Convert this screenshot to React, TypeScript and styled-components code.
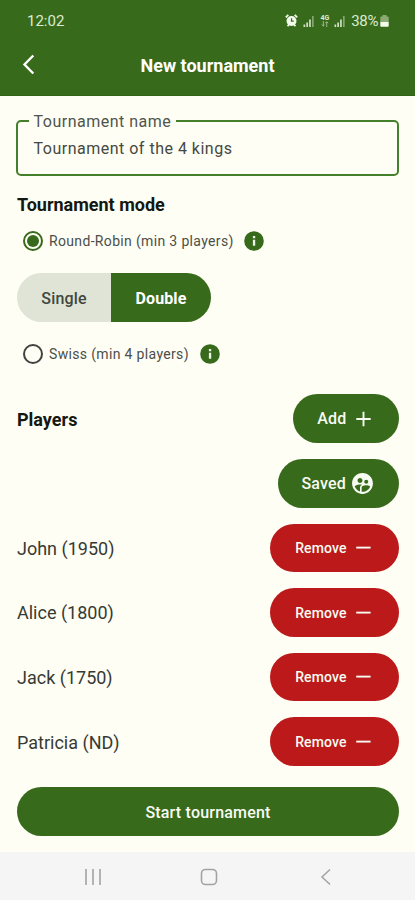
import React from "react";
import styled, { createGlobalStyle } from "styled-components";
import { MdSupervisedUserCircle } from "react-icons/md";

const green = "#386a1c";
const red = "#bb191a";
const paper = "#fefef5";

const GlobalStyle = createGlobalStyle`
  * { box-sizing: border-box; }
  body { margin: 0; background: ${paper}; font-family: Roboto, sans-serif; }
  button { font-family: inherit; border: 0; padding: 0; margin: 0; }
`;

const Screen = styled.div`
  width: 415px;
  height: 900px;
  display: flex;
  flex-direction: column;
  overflow: hidden;
  background: ${paper};
  color: #1c1f1a;
`;

const Header = styled.header`
  height: 96px;
  flex: none;
  background: ${green};
  color: #fff;
  border-bottom: 1px solid #2f6414;
`;

const StatusBar = styled.div`
  height: 40px;
  padding: 1px 26px 0 27px;
  display: flex;
  align-items: center;
  justify-content: space-between;
  color: #dcebd0;
`;

const StatusText = styled.span<{ $spacing: number; $left?: number }>`
  margin-left: ${(p) => p.$left ?? 0}px;
  font-size: 15px;
  line-height: 20px;
  letter-spacing: ${(p) => p.$spacing}px;
`;

const StatusIcons = styled.div`
  display: flex;
  align-items: center;
`;

const TitleBar = styled.div`
  height: 50px;
  display: grid;
  grid-template-columns: 60px 1fr 60px;
  align-items: center;
`;

const BackButton = styled.button`
  display: flex;
  padding-left: 20px;
  background: none;
  color: #fff;
`;

const Title = styled.h1`
  margin: 0;
  padding-top: 1px;
  text-align: center;
  font-size: 18px;
  line-height: 24px;
  font-weight: 700;
`;

const Main = styled.main`
  flex: 1;
  padding: 14px 16px 0 17px;
  display: flex;
  flex-direction: column;
`;

const Field = styled.fieldset`
  height: 66px;
  margin: 0 0 0 -1px;
  padding: 0 0 0 15.5px;
  border: 2px solid #44802b;
  border-radius: 5px;
  min-width: 0;
  flex: none;
`;

const Legend = styled.legend`
  margin-left: -5px;
  padding: 2px 5px 0;
  font-size: 16px;
  line-height: 20px;
  letter-spacing: 0.5px;
  color: #50544c;
`;

const Value = styled.div`
  margin-top: 6px;
  font-size: 16px;
  line-height: 22px;
  letter-spacing: 0.5px;
  color: #454941;
`;

const Heading = styled.h2`
  margin: 0;
  font-size: 18px;
  line-height: 24px;
  font-weight: 700;
  color: #141812;
`;

const ModeHeading = styled(Heading)`
  margin-top: 17px;
`;

const Option = styled.label<{ $top: number }>`
  margin: ${(p) => p.$top}px 0 0 6px;
  height: 22px;
  display: flex;
  align-items: center;
`;

const Radio = styled.span<{ $checked?: boolean }>`
  width: 20px;
  height: 20px;
  display: grid;
  place-items: center;
  border: 2px solid ${(p) => (p.$checked ? green : "#41433f")};
  border-radius: 50%;
  &::after {
    content: "";
    width: 12px;
    height: 12px;
    border-radius: 50%;
    background: ${(p) => (p.$checked ? green : "transparent")};
  }
`;

const OptionText = styled.span<{ $width: number }>`
  width: ${(p) => p.$width}px;
  margin-left: 6px;
  font-size: 14px;
  line-height: 20px;
  letter-spacing: 0.34px;
  white-space: nowrap;
  color: #4c4f49;
`;

const Segments = styled.div`
  width: 194px;
  height: 49px;
  margin-top: 21px;
  display: grid;
  grid-template-columns: 94px 100px;
  border-radius: 25px;
  overflow: hidden;
`;

const Segment = styled.button<{ $active?: boolean }>`
  padding-top: 1px;
  background: ${(p) => (p.$active ? green : "#dfe4d7")};
  color: ${(p) => (p.$active ? "#fff" : "#42483e")};
  font-size: 16px;
  font-weight: ${(p) => (p.$active ? 700 : 500)};
  letter-spacing: ${(p) => (p.$active ? 0.1 : 0.15)}px;
`;

const PlayersTop = styled.section`
  margin-top: 29px;
  display: flex;
  justify-content: space-between;
  align-items: flex-start;
`;

const PlayersHeading = styled(Heading)`
  margin-top: 14px;
`;

const Actions = styled.div`
  display: flex;
  flex-direction: column;
  align-items: flex-end;
  gap: 16.5px;
`;

const Pill = styled.button<{ $width?: number; $tone?: string; $gap?: number; $right?: number }>`
  width: ${(p) => (p.$width ? `${p.$width}px` : "100%")};
  height: 48.5px;
  padding-top: 1px;
  padding-right: ${(p) => p.$right ?? 0}px;
  display: flex;
  align-items: center;
  justify-content: ${(p) => (p.$width ? "flex-end" : "center")};
  gap: ${(p) => p.$gap ?? 0}px;
  border-radius: 25px;
  background: ${(p) => p.$tone ?? green};
  color: #f7fbf2;
  font-size: 16px;
  font-weight: 500;
  letter-spacing: 0.2px;
`;

const RemovePill = styled(Pill)`
  font-size: 14px;
  letter-spacing: 0.1px;
`;

const PlayerList = styled.div`
  margin-top: 16px;
  display: flex;
  flex-direction: column;
  gap: 16.1px;
`;

const PlayerRow = styled.div`
  height: 48.5px;
  display: flex;
  align-items: center;
  justify-content: space-between;
`;

const PlayerName = styled.span`
  padding-top: 2px;
  font-size: 18px;
  line-height: 24px;
  color: #373a34;
`;

const Start = styled.div`
  margin-top: 21.5px;
`;

const NavBar = styled.nav`
  height: 48px;
  flex: none;
  padding: 2px 47.5px 0 51px;
  display: grid;
  grid-template-columns: 84px 1fr 84px;
  place-items: center;
  background: #f5f5f5;
  color: #a3a3a3;
`;

const AlarmIcon = () => (
  <svg width="13" height="13" viewBox="0 0 13 13">
    <circle cx="6.5" cy="7" r="5" fill="#f2faec" />
    <path d="M.8 3.3 3.3.8M9.7.8l2.5 2.5M2.5 12.2l1.5-1.5M9 10.7l1.5 1.5" stroke="#f2faec" strokeWidth="1.8" />
    <path d="M6.5 4.2v3h2.2" fill="none" stroke={green} strokeWidth="1.2" />
  </svg>
);

const SignalWrap = styled.svg<{ $left: number }>`
  margin-left: ${(p) => p.$left}px;
`;

const SignalIcon = ({ left }: { left: number }) => (
  <SignalWrap $left={left} width="11" height="12" viewBox="0 0 11 12" fill="#cfe0c2">
    <path d="M.5 9.5h1.7V12H.5zM3.3 7.5H5V12H3.3zM6.1 4.5h1.7V12H6.1z" />
    <path d="M9 1h1.7v11H9z" opacity=".5" />
  </SignalWrap>
);

const NetworkBox = styled.span`
  width: 9px;
  margin-left: 6px;
  display: flex;
  flex-direction: column;
  align-items: center;
  font-size: 7px;
  line-height: 6px;
  font-weight: 700;
`;

const BatteryWrap = styled.svg`
  margin-left: 2px;
`;

const players = ["John (1950)", "Alice (1800)", "Jack (1750)", "Patricia (ND)"];

const InfoIcon = () => (
  <svg width="20" height="20" viewBox="0 0 20 20">
    <circle cx="10" cy="10" r="9.8" fill={green} />
    <path d="M8.9 5h2.3v2.2H8.9zM8.9 8.8h2.3v6H8.9z" fill="#eef5e8" />
  </svg>
);

const PlusIcon = () => (
  <svg width="15" height="16" viewBox="0 0 15 16">
    <path d="M7.5.8v14.4M.3 8h14.4" stroke="currentColor" strokeWidth="1.9" />
  </svg>
);

const MinusIcon = () => (
  <svg width="15" height="4" viewBox="0 0 15 4">
    <path d="M.2 1.6h14.4" stroke="currentColor" strokeWidth="1.9" />
  </svg>
);

export default function App() {
  return (
    <>
      <GlobalStyle />
      <Screen>
        <Header>
          <StatusBar>
            <StatusText $spacing={0}>12:02</StatusText>
            <StatusIcons>
              <AlarmIcon />
              <SignalIcon left={5} />
              <NetworkBox>
                4G
                <svg width="8" height="6" viewBox="0 0 8 6">
                  <path d="M2.3 0v5M.8 3.5l1.5 1.7L3.5 4M5.7 6V1M4.3 2.2 5.7.7l1.4 1.5" fill="none" stroke="#9dbb88" strokeWidth="1" />
                </svg>
              </NetworkBox>
              <SignalIcon left={5} />
              <StatusText $spacing={-0.4} $left={6}>38%</StatusText>
              <BatteryWrap width="9" height="13" viewBox="0 0 9 13">
                <path d="M2.5 1h4v1.5H8q.7 0 .7.7V8H.3V3.2q0-.7.7-.7h1.5z" fill="#8aab73" />
                <path d="M.3 8h8.4v4q0 .7-.7.7H1q-.7 0-.7-.7z" fill="#f2faec" />
              </BatteryWrap>
            </StatusIcons>
          </StatusBar>
          <TitleBar>
            <BackButton aria-label="Back">
              <svg width="18" height="22" viewBox="0 0 18 22">
                <path d="M13.3 1.5 4.5 10.5l8.8 9" fill="none" stroke="currentColor" strokeWidth="2.4" />
              </svg>
            </BackButton>
            <Title>New tournament</Title>
          </TitleBar>
        </Header>
        <Main>
          <Field>
            <Legend>Tournament name</Legend>
            <Value>Tournament of the 4 kings</Value>
          </Field>
          <ModeHeading>Tournament mode</ModeHeading>
          <Option $top={13}>
            <Radio $checked />
            <OptionText $width={195}>Round-Robin (min 3 players)</OptionText>
            <InfoIcon />
          </Option>
          <Segments>
            <Segment>Single</Segment>
            <Segment $active>Double</Segment>
          </Segments>
          <Option $top={21}>
            <Radio />
            <OptionText $width={150.5}>Swiss (min 4 players)</OptionText>
            <InfoIcon />
          </Option>
          <PlayersTop>
            <PlayersHeading>Players</PlayersHeading>
            <Actions>
              <Pill $width={106} $gap={9} $right={28.5}>Add<PlusIcon /></Pill>
              <Pill $width={121} $gap={4} $right={24}>Saved<MdSupervisedUserCircle size={25} /></Pill>
            </Actions>
          </PlayersTop>
          <PlayerList>
            {players.map((name) => (
              <PlayerRow key={name}>
                <PlayerName>{name}</PlayerName>
                <RemovePill $width={129} $tone={red} $gap={9} $right={28.5}>Remove<MinusIcon /></RemovePill>
              </PlayerRow>
            ))}
          </PlayerList>
          <Start>
            <Pill>Start tournament</Pill>
          </Start>
        </Main>
        <NavBar>
          <svg width="18" height="18" viewBox="0 0 18 18">
            <path d="M2 1v16M9 1v16M16 1v16" stroke="currentColor" strokeWidth="1.6" />
          </svg>
          <svg width="18" height="18" viewBox="0 0 18 18">
            <rect x="1.5" y="1.5" width="15" height="15" rx="4" fill="none" stroke="currentColor" strokeWidth="1.6" />
          </svg>
          <svg width="12" height="18" viewBox="0 0 12 18">
            <path d="M10 1.5 2 9l8 7.5" fill="none" stroke="currentColor" strokeWidth="1.5" />
          </svg>
        </NavBar>
      </Screen>
    </>
  );
}
